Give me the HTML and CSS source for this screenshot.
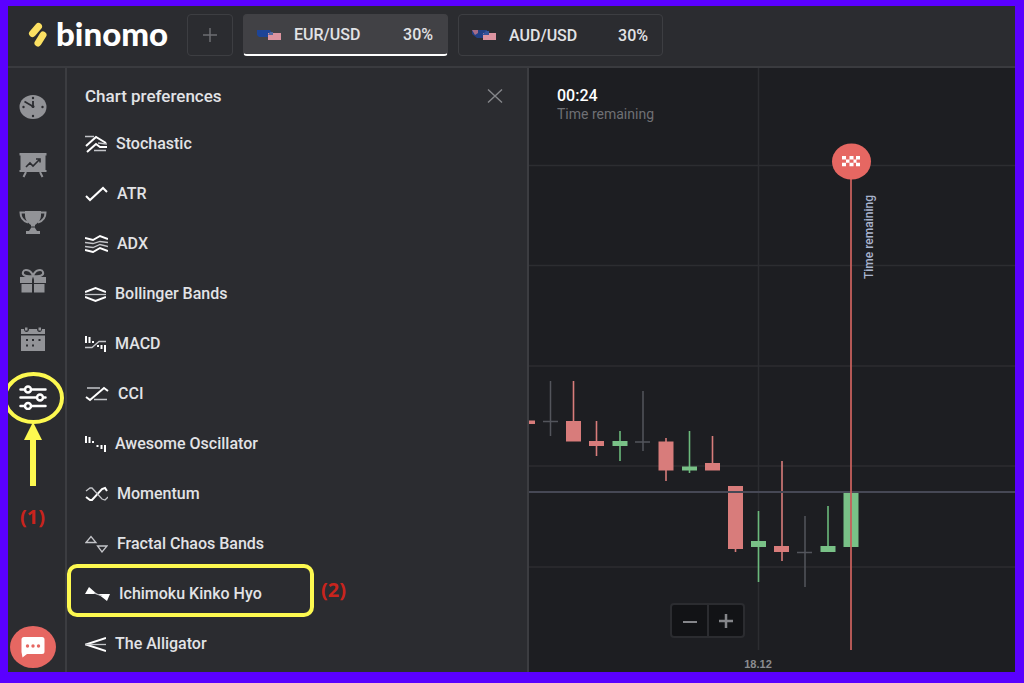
FILE: index.html
```
<!DOCTYPE html>
<html lang="en">
<head>
<meta charset="utf-8">
<title>binomo</title>
<link rel="stylesheet" href="styles.css">
</head>
<body>
<div class="app">
  <header class="topbar">
    <a class="logo" href="#">
      <svg width="20" height="26" viewBox="0 0 20 26" fill="none" stroke="#fbe062" stroke-width="7" stroke-linecap="round"><path d="M10.500 4.500L4.500 11.500M15 13L10 21"/></svg>
      <span>binomo</span>
    </a>
    <button class="add" aria-label="Add asset"><svg width="14" height="14" viewBox="0 0 14 14" stroke="#6d6e72" stroke-width="1.500"><path d="M0 7h14M7 0v14"/></svg></button>
    <nav class="tabs">
      <button class="tab active">
        <svg width="26" height="14" viewBox="0 0 26 14"><path d="M1 2h13l2 3v2l-3 2H3L1 7z" fill="#1d4497"/><path d="M12 5h13v7H12z" fill="#dc94a0"/><path d="M12 7h5V4h-3z" fill="#52699f"/></svg>
        <span class="pair">EUR/USD</span><span>30%</span>
      </button>
      <button class="tab">
        <svg width="26" height="14" viewBox="0 0 26 14"><path d="M1 2h15v5l-4 3H6L1 6z" fill="#213f83"/><path d="M1 2h6v3L4 7z" fill="#a66c86"/><path d="M12 5h13v7H12z" fill="#dc94a0"/><path d="M11 7h7V3h-3z" fill="#34549a"/></svg>
        <span class="pair">AUD/USD</span><span>30%</span>
      </button>
    </nav>
  </header>
  <main class="work">
    <aside class="side">
      <button aria-label="History"><svg width="28" height="26" viewBox="0 0 28 26"><ellipse cx="14" cy="13" rx="13.500" ry="12" fill="#929397"/><path d="M5.500 7.500L14 12.500V7" fill="none" stroke="#2b2c30" stroke-width="1.800"/><g fill="#2b2c30"><circle cx="14" cy="4" r="1.200"/><circle cx="4.500" cy="13" r="1.200"/><circle cx="23.500" cy="13" r="1.200"/><circle cx="14" cy="22" r="1.200"/><circle cx="14" cy="12.500" r="1.500"/></g></svg></button>
      <button aria-label="Strategies"><svg width="28" height="26" viewBox="0 0 28 26"><path d="M.500 1h27v2.500h-1V18h1v2h-27v-2h1V3.500h-1z" fill="#929397"/><path d="M7 20l-2.500 5M21 20l2.500 5" stroke="#929397" stroke-width="2"/><path d="M7 15l4-4 3 3 6-6M17 7h4v3.500" fill="none" stroke="#2b2c30" stroke-width="1.600"/></svg></button>
      <button aria-label="Tournaments"><svg width="28" height="26" viewBox="0 0 28 26"><path d="M6 1h16v4c0 5-3 8-6 10v3l2 3h3v3H7v-3h3l2-3v-3C9 13 6 10 6 5z" fill="#929397"/><path d="M7 2.500H1.500C1.500 8 4 11 9 12.500M21 2.500h5.500C26.500 8 24 11 19 12.500" fill="none" stroke="#929397" stroke-width="2"/><path d="M11 17h6" stroke="#2b2c30"/></svg></button>
      <button aria-label="Bonuses"><svg width="28" height="26" viewBox="0 0 28 26"><path d="M1 9h12v6H1zM15 9h12v6H15zM2.500 16H13v8.500H2.500zM15 16h10.500v8.500H15z" fill="#929397"/><path d="M14 8C6 9 3 7 4 4s8-3 10 4c2-7 9-7 10-4s-2 5-10 4z" fill="none" stroke="#929397" stroke-width="2"/></svg></button>
      <button aria-label="Calendar"><svg width="28" height="26" viewBox="0 0 28 26"><path d="M2 3h3c0 4 5 4 5 0h8c0 4 5 4 5 0h3v5H2zM2 9.500h24V25H2z" fill="#929397"/><path d="M6 1.500h2.500v3H6zM19.500 1.500H22v3h-2.500z" fill="#929397"/><path d="M7 13h2v2H7zM13 13h2v2h-2zM19.500 13h2v2h-2zM7 18.500h2v2H7zM13 18.500h2v2h-2z" fill="#2b2c30"/></svg></button>
      <button aria-label="Chart preferences"><svg width="28" height="26" viewBox="0 0 28 26" fill="none" stroke="#fff" stroke-width="2.500" stroke-linecap="round"><path d="M1.500 5.500H5M13 5.500h13.500M1.500 13.500H17M25 13.500h1.500M1.500 22H5M13 22h13.500"/><circle cx="9" cy="5.500" r="3"/><circle cx="21" cy="13.500" r="3"/><circle cx="9" cy="22" r="3"/></svg></button>
      <button class="chat" aria-label="Support chat"><svg width="24" height="22" viewBox="0 0 24 22"><path d="M3 1h18q2.500 0 2.500 2.500v12Q23.500 18 21 18H6l-4.500 3.500L.500 16V3.500Q.500 1 3 1z" fill="#fff"/><g fill="#e66762"><circle cx="6.500" cy="10" r="1.700"/><circle cx="12" cy="10" r="1.700"/><circle cx="17.500" cy="10" r="1.700"/></g></svg></button>
      <svg class="pointer" width="57" height="120" viewBox="8 370 57 120"><ellipse cx="33.500" cy="398" rx="28.500" ry="24" fill="none" stroke="#fdf950" stroke-width="4"/><path d="M33 422l9 18h-6v46h-6v-46h-6z" fill="#fdf950"/></svg>
      <span class="note one">(1)</span>
    </aside>
    <section class="panel">
      <div class="head"><h1>Chart preferences</h1><button aria-label="Close"><svg width="16" height="14" viewBox="0 0 16 14" stroke="#85868a" stroke-width="1.400"><path d="M1 .500l14 13M15 .500L1 13.500"/></svg></button></div>
      <ul class="list">
        <li><button><svg width="22" height="20" viewBox="0 0 22 20"><path class="w" d="M1 13L11 4l10 6M2 19l9-8 4 3h7"/><path class="t" d="M0 3.500h9M9 17.500h12M13 10l9 1"/></svg>Stochastic</button></li>
        <li><button><svg width="23" height="20" viewBox="0 0 23 20"><path class="w" d="M1 13l4 4L18 5l4 4"/></svg>ATR</button></li>
        <li><button><svg width="23" height="20" viewBox="0 0 23 20"><path class="w" d="M0 5l8 2 7-4 8 3M0 17l8 2 7-4 8 3"/><path class="t" d="M0 9.500l8 1 7-2 8 1M0 13.500l8 1 7-3 8 2"/></svg>ADX</button></li>
        <li><button><svg width="21" height="20" viewBox="0 0 21 20"><path class="w" d="M0 9l10.500-4L21 9M0 14l10.500 4L21 14"/><path class="t" d="M0 11.500h21"/></svg>Bollinger Bands</button></li>
        <li><button><svg width="21" height="20" viewBox="0 0 21 20"><path class="w" d="M1 3v7M4.500 4v6M8 8v2M13 12v2M16.500 12v4M20 12v7"/><path class="t" d="M0 14.500h7l7-6h7"/></svg>MACD</button></li>
        <li><button><svg width="24" height="20" viewBox="0 0 24 20"><path class="w" d="M1 14l4 3L19 5l4 3"/><path class="t" d="M2 5h13M9 16.500h13"/></svg>CCI</button></li>
        <li><button><svg width="21" height="20" viewBox="0 0 21 20"><path class="w" d="M1 3v7M4.500 4v6M8 8v2M12.500 12v2M16.500 12v4M20 12v7"/></svg>Awesome Oscillator</button></li>
        <li><button><svg width="23" height="20" viewBox="0 0 23 20"><path class="w" d="M1 14l4 3h2L17 6l3-1 2 3"/><path class="t" d="M1 8l4-3h2l10 11 3 1 3-3"/></svg>Momentum</button></li>
        <li><button><svg width="23" height="20" viewBox="0 0 23 20"><path class="t" d="M1 9.500l5-6 5 6zM12.500 13h9.500l-5 6z"/></svg>Fractal Chaos Bands</button></li>
        <li class="picked"><button><svg width="25" height="20" viewBox="0 0 25 20"><path d="M0 11l4-7 8 7zM13 11h12l-3 7z" fill="#fff"/><path class="t" d="M9 10l8 3"/></svg>Ichimoku Kinko Hyo</button></li>
        <li><button><svg width="21" height="20" viewBox="0 0 21 20"><path class="w" d="M21 5L1 11.500 21 18"/><path class="t" d="M0 11.500h21"/></svg>The Alligator</button></li>
      </ul>
      <span class="note two">(2)</span>
    </section>
    <section class="chart">
      <svg class="plot" viewBox="529 68 486 604" preserveAspectRatio="xMinYMin slice">
        <path d="M529 165.500h486M529 265.500h486M529 366h486M529 466h486M529 567h486M758.500 68v582" stroke="#2c2d31" stroke-width="1.500"/>
        <g stroke="#53555c" stroke-width="1.500"><path d="M550.500 381v55M543 421.500h15M643 391v60M635 442h15M805 516v71M797 552.500h15"/></g>
        <g stroke="#d87c7b" stroke-width="1.600"><path d="M573.500 381v60M596.500 421v35M666 438v43M712.500 436v34M735.500 486v66M782 461v100"/></g>
        <g fill="#d87c7b"><path d="M529 420.500h6v3.500h-6zM566 421h15v20.500h-15zM589 441h15v5h-15zM658.500 441.500h15v29h-15zM705 463h15v7.500h-15zM728 486h15v63h-15zM774 546h15v6h-15z"/></g>
        <g stroke="#6bb97c" stroke-width="1.600"><path d="M620 431v30M689.500 431v42M758.500 511v71M828 506v46"/></g>
        <g fill="#79c187"><path d="M612.500 441h15v5h-15zM682 466.500h15v4h-15zM751 541h15v6h-15zM820.500 546h15v6h-15zM843.500 492h15v55h-15z"/></g>
        <path d="M529 492h486" stroke="#464855" stroke-width="2"/>
        <path d="M851 179v471" stroke="#c65f5c" stroke-width="1.800"/>
        <ellipse cx="851.500" cy="161.500" rx="19.500" ry="18" fill="#e66762"/>
        <path fill="#fff" d="M842 156h4v3.400h-4zM849.500 156h4v3.400h-4zM856 156h4v3.400h-4zM846 159.400h3.500v3.400H846zM853.500 159.400h3v3.400h-3zM842 162.800h4v3.400h-4zM849.500 162.800h4v3.400h-4zM856 162.800h4v3.400h-4z"/>
        <text class="vert" transform="translate(873 279) rotate(-90)">Time remaining</text>
        <text class="date" x="758" y="668" text-anchor="middle">18.12</text>
      </svg>
      <div class="timer"><strong>00:24</strong><span>Time remaining</span></div>
      <div class="zoom">
        <button aria-label="Zoom out"><svg width="14" height="14" viewBox="0 0 14 14" stroke="#85868a" stroke-width="2"><path d="M0 8h14"/></svg></button>
        <button aria-label="Zoom in"><svg width="14" height="14" viewBox="0 0 14 14" stroke="#85868a" stroke-width="2.500"><path d="M0 7h14M7 0v14"/></svg></button>
      </div>
    </section>
  </main>
</div>
</body>
</html>
```
FILE: styles.css
```
* { box-sizing: border-box; }
body {
  margin: 0;
  min-height: 100vh;
  padding: 6px 9px 11px 8px;
  display: flex;
  background: #5a00ff;
  font-family: Roboto, "Liberation Sans", sans-serif;
  color: #e2e3e6;
}
button {
  padding: 0;
  border: 0;
  background: none;
  color: inherit;
  font: inherit;
  cursor: pointer;
}
svg { display: block; flex: none; }
.app { flex: 1; display: flex; flex-direction: column; background: #2b2c30; }
.topbar {
  display: flex;
  align-items: flex-start;
  height: 62px;
  padding: 8px 20px 0;
  border-bottom: 2px solid #3a3b3f;
}
.logo {
  display: flex;
  align-items: center;
  gap: 8px;
  width: 159px;
  height: 42px;
  color: #fff;
  text-decoration: none;
  font: 900 33px/40px Lato, sans-serif;
}
.logo span { padding-bottom: 4px; }
.add {
  display: grid;
  place-items: center;
  width: 46px;
  height: 42px;
  margin-right: 10px;
  border: 1px solid #3d3e42;
  border-radius: 4px;
}
.tabs { display: flex; gap: 10px; }
.tab {
  display: flex;
  align-items: center;
  width: 205px;
  height: 42px;
  padding: 0 14px 0 12px;
  border: 1px solid #3d3e42;
  border-radius: 4px;
  font-size: 16px;
  font-weight: 500;
}
.tab.active { background: #414145; border-color: #414145; border-bottom: 2px solid #fff; }
.pair { flex: 1; margin-left: 12px; text-align: left; }
.work { flex: 1; display: flex; }
.side {
  position: relative;
  width: 59px;
  padding: 26px 0 4px;
  display: flex;
  flex-direction: column;
  align-items: center;
  gap: 32px;
  border-right: 2px solid #3c3d41;
  overflow: hidden;
}
.side button { margin-right: 7px; }
.side .chat {
  display: grid;
  place-items: center;
  flex: none;
  width: 46px;
  height: 42px;
  margin-top: auto;
  border-radius: 50%;
  background: #e66762;
}
.pointer { position: absolute; left: 0; top: 302px; }
.note { position: absolute; color: #c9241d; font: 700 20px/24px "Open Sans", sans-serif; }
.one { left: 12px; top: 437px; }
.two { left: 254px; top: 510px; }
.panel { position: relative; width: 462px; border-right: 2px solid #3c3d41; }
.head { display: flex; align-items: center; justify-content: space-between; height: 50px; padding: 6px 24px 0 18px; }
h1 { margin: 0; font-size: 17px; font-weight: 500; }
.list { margin: 0; padding: 0; list-style: none; }
.list li { width: 247px; height: 50px; }
.list button {
  display: flex;
  align-items: center;
  gap: 9px;
  width: 100%;
  height: 50px;
  padding-left: 18px;
  font-size: 16px;
  font-weight: 500;
  text-align: left;
}
.list .picked { display: flex; }
.list .picked button {
  height: 53px;
  margin-top: -4px;
  padding: 5px 0 0 14px;
  border: 4px solid #fdf950;
  border-radius: 10px;
}
.w { fill: none; stroke: #fff; stroke-width: 2; }
.t { fill: none; stroke: #c4c5c9; stroke-width: 1.3; }
.chart { position: relative; flex: 1; background: #1d1e22; overflow: hidden; }
.plot { position: absolute; width: 100%; height: 100%; }
.vert { fill: #a9b4cf; font-size: 12px; font-weight: 500; }
.date { fill: #8b8c90; font: 700 11px "Liberation Sans", sans-serif; }
.timer { position: absolute; left: 28px; top: 19px; display: flex; flex-direction: column; font-size: 14px; line-height: 18px; color: #6f7074; }
.timer strong { font-size: 16px; font-weight: 500; color: #fff; }
.zoom { position: absolute; left: 141px; bottom: 34px; display: flex; border: 2px solid #2b2c30; border-radius: 4px; background: #121316; }
.zoom button { display: grid; place-items: center; width: 35px; height: 31px; }
.zoom button + button { width: 36px; border-left: 2px solid #2b2c30; }
```
